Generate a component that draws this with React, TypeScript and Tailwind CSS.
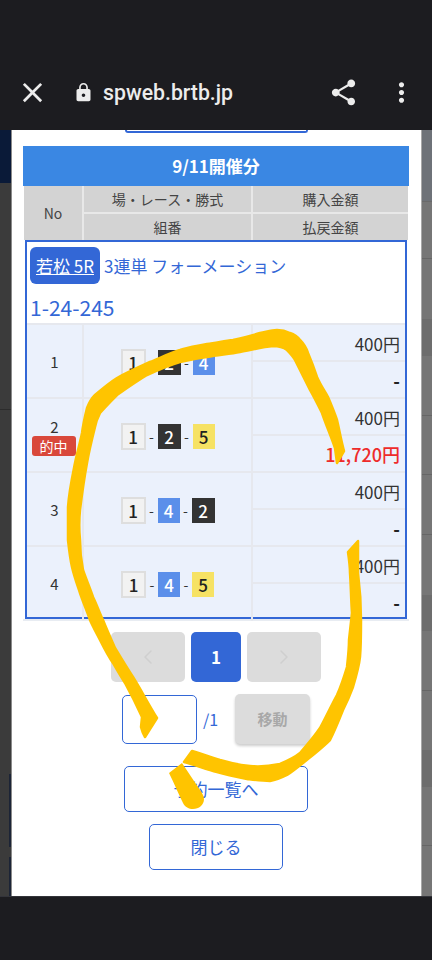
import React from "react";
import { MdClose, MdLock, MdShare, MdMoreVert } from "react-icons/md";
import { ChevronLeft, ChevronRight } from "lucide-react";

const boatCls: Record<number, string> = {
  1: "w-[25px] h-[27px] bg-[#f2f2f2] border-2 border-[#dedede] text-[#222]",
  2: "w-[23px] h-[25px] bg-[#333333] text-white",
  4: "w-[22px] h-[25px] bg-[#5b8fea] text-white",
  5: "w-[22px] h-[25px] bg-[#f6e264] text-[#222]",
};

function Boat({ n }: { n: number }) {
  return (
    <div className={`flex items-center justify-center text-[17px] font-medium leading-none ${boatCls[n]}`}>{n}</div>
  );
}

function Row({ no, boats, pay, hit, last }: { no: number; boats: number[]; pay: string; hit?: boolean; last?: boolean }) {
  return (
    <div className={`grid grid-cols-[57px_169px_1fr] bg-[#ebf1fc] ${last ? "h-[70px]" : "h-[74px] border-b-2 border-[#e6e8ee]"}`}>
      <div className="flex flex-col items-center justify-center border-r-2 border-[#e6e8ee] text-[15px] text-[#333] leading-[20px]">
        <span>{no}</span>
        {hit && (
          <span className="mt-[-1px] mr-[2px] w-[44px] h-[20px] rounded-[3px] bg-[#d9483b] text-white text-[14px] leading-[20px] text-center">的中</span>
        )}
      </div>
      <div className="flex items-center justify-center border-r-2 border-[#e6e8ee]">
        <Boat n={boats[0]} />
        <span className="w-[12px] text-center text-[14px] text-[#333]">-</span>
        <Boat n={boats[1]} />
        <span className="w-[12px] text-center text-[14px] text-[#333]">-</span>
        <Boat n={boats[2]} />
      </div>
      <div className="flex flex-col">
        <div className="h-[37px] border-b-2 border-[#e6e8ee] pr-[5px] text-right text-[17px] leading-[37px] text-[#333]">400円</div>
        <div className={`flex-1 pr-[5px] text-right leading-[37px] ${pay === "-" ? "text-[18px] font-bold text-[#222]" : "text-[18px] font-medium text-[#ee2b2b]"}`}>{pay}</div>
      </div>
    </div>
  );
}

export default function App() {
  return (
    <div
      className="relative flex h-[960px] w-[432px] flex-col overflow-hidden bg-[#1c1c20]"
      style={{ fontFamily: '"Noto Sans CJK JP", "Noto Sans", sans-serif' }}
    >
      {/* browser bar */}
      <div className="flex h-[130px] shrink-0 items-center bg-[#1c1c20] pl-[16px] pr-[15px] pt-[54px] text-[#ececec]">
        <MdClose size={33} />
        <MdLock size={21} className="ml-[24px]" />
        <span className="ml-[9px] mt-[2px] text-[21.25px] font-medium leading-none" style={{ fontFamily: "Roboto, sans-serif" }}>spweb.brtb.jp</span>
        <MdShare size={31} className="ml-auto" />
        <MdMoreVert size={31} className="ml-[27px]" />
      </div>

      <div className="flex h-[766px] shrink-0">
        {/* dimmed page, left */}
        <div className="flex w-[12px] shrink-0 flex-col border-r border-[#8a8a8a] bg-[#3b3b3b]">
          <div className="h-[53px] bg-[#0a1a38]" />
          <div className="h-[227px] border-b border-[#2c2c2c]" />
          <div className="h-[364px]" />
          <div className="ml-[9px] h-[73px] bg-[#1c2436]" />
          <div className="h-[10px]" />
          <div className="ml-[9px] flex-1 bg-[#1c2436]" />
        </div>

        {/* modal */}
        <div className="flex w-[409px] shrink-0 flex-col items-center bg-white pr-px">
          <div className="h-[3px] w-[183px] shrink-0 rounded-b-[4px] border-x-2 border-b-2 border-[#3367d6]" />
          <div className="mt-[13px] w-[386px] border-b-2 border-[#e8ecf2]">
            <div className="h-[40px] bg-[#3a87e3] text-center text-[17px] font-bold leading-[40px] text-white">9/11開催分</div>
            <div className="mx-px grid h-[54px] grid-cols-[60px_169px_1fr] bg-[#d3d3d3] text-[14px] text-[#444]">
              <div className="row-span-2 flex items-center justify-center border-r-2 border-[#e8e8e8]">No</div>
              <div className="flex items-center justify-center border-b-2 border-r-2 border-[#e8e8e8]">場・レース・勝式</div>
              <div className="flex items-center justify-center border-b-2 border-[#e8e8e8]">購入金額</div>
              <div className="flex items-center justify-center border-r-2 border-[#e8e8e8]">組番</div>
              <div className="flex items-center justify-center">払戻金額</div>
            </div>
            <div className="mx-[2px] border-2 border-[#3367d6]">
              <div className="h-[83px] border-b-2 border-[#e6e8ee] bg-white px-[3px] pt-[5px] text-[#3367d6]">
                <div className="flex h-[37px] items-center text-[17px]">
                  <span className="flex h-[37px] w-[70px] items-center justify-center rounded-[6px] bg-[#3367d6] text-white underline">若松 5R</span>
                  <span className="ml-[4px]">3連単 フォーメーション</span>
                </div>
                <div className="mt-[9px] text-[21px] leading-[28px]">1-24-245</div>
              </div>
              <Row no={1} boats={[1, 2, 4]} pay="-" />
              <Row no={2} boats={[1, 2, 5]} pay="11,720円" hit />
              <Row no={3} boats={[1, 4, 2]} pay="-" />
              <Row no={4} boats={[1, 4, 5]} pay="-" last />
            </div>
          </div>

          {/* pagination */}
          <div className="mt-[11px] flex h-[50px] gap-[6px]">
            <div className="flex w-[74px] items-center justify-center rounded-[5px] bg-[#dcdcdc] text-[#cfcfcf]"><ChevronLeft size={24} strokeWidth={1.5} /></div>
            <div className="flex w-[50px] items-center justify-center rounded-[5px] bg-[#3367d6] text-[17px] font-bold text-white">1</div>
            <div className="flex w-[74px] items-center justify-center rounded-[5px] bg-[#dcdcdc] text-[#cfcfcf]"><ChevronRight size={24} strokeWidth={1.5} /></div>
          </div>
          <div className="mt-[12px] flex h-[50px] w-[188px] items-center">
            <div className="h-[49px] w-[75px] rounded-[5px] border border-[#3367d6]" />
            <span className="ml-[6px] text-[16px] text-[#3367d6]">/1</span>
            <div className="ml-auto flex h-[50px] w-[75px] items-center justify-center rounded-[5px] bg-[#dcdcdc] text-[15px] font-bold text-[#a8a8a8] shadow-[0_2px_3px_rgba(0,0,0,0.2)]">移動</div>
          </div>
          <button className="mt-[22px] h-[46px] w-[184px] rounded-[5px] border border-[#3367d6] text-[17px] text-[#3367d6]">予約一覧へ</button>
          <button className="mt-[12px] h-[46px] w-[134px] rounded-[5px] border border-[#3367d6] text-[17px] text-[#3367d6]">閉じる</button>
        </div>

        {/* dimmed page, right */}
        <div className="flex flex-1 flex-col border-l border-[#a8a8a8] bg-[#767676]">
          <div className="h-[72px] border-b border-[#6a6a6a] bg-[#6e7278]" />
          <div className="h-[57px] border-b border-[#666]" />
          <div className="h-[60px]" />
          <div className="h-[37px] bg-[#6d6d6d]" />
          <div className="h-[60px] border-b border-[#666]" />
          <div className="h-[59px] border-b border-[#666]" />
          <div className="h-[60px] border-b border-[#666]" />
          <div className="h-[60px]" />
          <div className="h-[36px] bg-[#6d6d6d]" />
          <div className="h-[60px] border-b border-[#666]" />
          <div className="h-[59px]" />
          <div className="h-[37px] bg-[#6d6d6d]" />
          <div className="h-[59px] border-b border-[#666]" />
        </div>
      </div>

      <div className="flex-1 border-t border-[#33343a] bg-[#1c1c20]" />

      {/* hand-drawn marker over the page */}
      <svg className="pointer-events-none absolute left-0 top-0" width="432" height="960" viewBox="0 0 432 960">
        <path
          fill="#ffc400"
          stroke="#ffc400"
          strokeWidth="2.5"
          strokeLinejoin="round"
          d="M344 451 C341 440 339 428 337 420 C334 411 331 404 328 397 C324 390 320 384 317 377 C314 368 311 360 308 353 C306 347 303 343 300 340 C297 336 293 334 290 333 C286 331 282 330 277 330 C271 330 266 332 260 333 C251 336 242 338 233 340 C224 341 216 343 207 344 C198 346 189 347 180 350 C170 353 160 358 150 362 C139 367 128 372 117 378 C109 383 102 389 95 395 C91 399 89 403 87 408 C85 416 83 425 82 433 C80 443 77 453 75 463 C72 478 69 492 68 507 C68 518 68 529 68 540 C69 549 70 558 72 567 C74 576 77 584 80 593 C83 602 87 611 90 620 C93 627 97 634 100 640 C104 648 108 656 113 663 C117 670 121 677 125 683 C131 694 137 706 142 717 L141 727 C142 731 143 734 145 737 L157 718 C149 705 141 690 133 677 C127 668 121 658 115 648 C111 639 107 630 103 620 C99 612 97 605 93 597 C90 588 86 579 83 570 C81 560 80 550 80 540 C79 530 79 520 80 510 C82 494 84 479 87 463 C89 451 92 439 95 427 C96 422 98 417 100 413 C105 407 111 401 117 395 C127 388 137 381 147 375 C158 370 169 365 180 362 C189 360 198 358 207 357 C218 355 229 354 240 352 C251 350 262 347 273 346 C278 346 283 347 287 350 C290 353 293 356 295 360 C300 370 305 380 310 390 C314 397 318 405 322 413 C326 425 331 436 335 448 L337 463 Z"
        />
        <path
          fill="#ffc400"
          stroke="#ffc400"
          strokeWidth="2.5"
          strokeLinejoin="round"
          d="M358 541 L348 552 C349 559 350 566 350 573 C351 587 351 600 352 613 C351 622 350 631 349 640 C349 649 348 658 347 667 C344 677 341 686 337 695 C331 706 326 717 320 728 C314 737 307 745 300 753 C294 758 287 761 280 764 C270 766 260 767 250 766 C240 765 230 763 220 760 C211 757 201 754 192 751 L184 762 C195 765 206 769 217 772 C227 775 237 777 247 779 C255 780 262 781 270 781 C276 780 281 778 287 775 C296 769 304 762 313 755 C319 750 325 745 330 740 C335 730 339 720 343 710 C347 702 350 695 353 687 C356 677 359 667 360 657 C361 645 361 632 361 620 C361 604 360 589 358 573 Z"
        />
        <path
          fill="#ffc400"
          d="M182 763 L169 773 C174 783 178 793 183 803 C185 807 189 809 193 809 C199 809 204 805 204 799 C204 796 202 793 200 790 C194 781 188 772 182 763 Z"
        />
      </svg>
    </div>
  );
}
